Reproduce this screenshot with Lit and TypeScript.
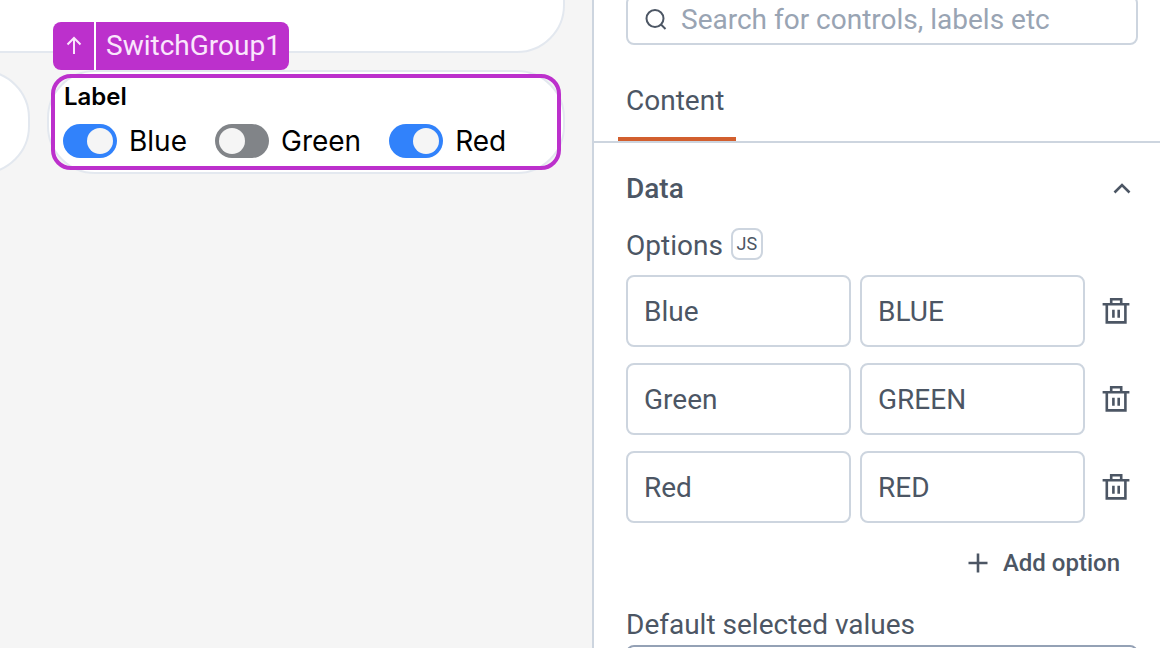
import { LitElement, html, css } from "lit";
import { customElement, state } from "lit/decorators.js";

interface Option {
  label: string;
  value: string;
  on: boolean;
}

@customElement("switch-group")
class SwitchGroup extends LitElement {
  static properties = { options: { attribute: false } };
  declare options: Option[];

  static styles = css`
    :host {
      display: block;
      color: #000;
      font-family: Inter, "Liberation Sans", sans-serif;
    }
    .group {
      margin: 0;
      padding: 0;
      border: 0;
      min-width: 0;
    }
    .title {
      padding: 0 1px;
      font-size: 24px;
      line-height: 32px;
      font-weight: 600;
    }
    .switches {
      display: flex;
      gap: 28px;
      padding-top: 10px;
    }
    .item {
      display: flex;
      align-items: center;
      gap: 12px;
      font-size: 28px;
      line-height: 36px;
    }
    .toggle {
      appearance: none;
      box-sizing: border-box;
      width: 54px;
      height: 34px;
      margin: 0;
      padding: 4px;
      border-radius: 17px;
      background: #818488;
      display: flex;
    }
    .toggle::before {
      content: "";
      width: 26px;
      height: 26px;
      border-radius: 50%;
      background: #f5f5f5;
    }
    .toggle:checked {
      background: #3182fb;
      justify-content: flex-end;
    }
  `;

  render() {
    return html`<fieldset class="group">
      <legend class="title">Label</legend>
      <div class="switches">
        ${this.options.map(
          (o) => html`<label class="item"
            ><input class="toggle" type="checkbox" role="switch" .checked=${o.on} />${o.label}</label
          >`
        )}
      </div>
    </fieldset>`;
  }
}

@customElement("property-pane")
class PropertyPane extends LitElement {
  static properties = { options: { attribute: false } };
  declare options: Option[];

  static styles = css`
    :host {
      display: block;
      box-sizing: border-box;
      border-left: 2px solid #cdd5df;
      background: #fff;
      color: #4c5664;
      font-family: Roboto, "Liberation Sans", sans-serif;
      font-size: 28px;
      line-height: 32px;
      overflow: hidden;
    }
    button,
    input {
      font: inherit;
      color: inherit;
    }
    button {
      background: none;
      border: 0;
      padding: 0;
      cursor: pointer;
    }
    svg {
      display: block;
      fill: none;
      stroke: currentColor;
    }
    .search {
      display: flex;
      align-items: center;
      gap: 12px;
      box-sizing: border-box;
      height: 50px;
      margin: -5px 22px 0 32px;
      padding: 0 16px 0 15px;
      border: 2px solid #cdd5df;
      border-radius: 8px;
    }
    .search-input {
      flex: 1;
      min-width: 0;
      border: 0;
      padding: 0;
      outline: 0;
      background: none;
    }
    .search-input::placeholder {
      color: #99a4b3;
      opacity: 1;
    }
    .tabs {
      display: flex;
      padding: 24px 24px 0;
      border-bottom: 2px solid #cdd5df;
    }
    .tab {
      height: 72px;
      padding: 0 12px 4px 8px;
      border-bottom: 4px solid #d25f2e;
    }
    .section {
      padding: 22px 22px 0 32px;
    }
    .section-toggle {
      display: flex;
      width: 100%;
      height: 48px;
      align-items: center;
      justify-content: space-between;
      padding-right: 4px;
      font-weight: 500;
    }
    .field-head {
      display: flex;
      align-items: flex-start;
      gap: 8px;
      padding: 15px 0 11px;
      line-height: 36px;
    }
    .js {
      box-sizing: border-box;
      width: 32px;
      height: 32px;
      border: 2px solid #cdd5df;
      border-radius: 8px;
      font-size: 18px;
      line-height: 28px;
    }
    .rows {
      display: grid;
      gap: 16px;
    }
    .row {
      display: grid;
      grid-template-columns: 1fr 1fr 44px;
      gap: 9px;
    }
    .field {
      box-sizing: border-box;
      width: 100%;
      min-width: 0;
      height: 72px;
      padding: 0 16px;
      border: 2px solid #cdd5df;
      border-radius: 8px;
      background: #fff;
    }
    .remove {
      display: grid;
      place-items: center;
    }
    .actions {
      display: flex;
      justify-content: flex-end;
      padding: 20px 18px 26px 0;
    }
    .add {
      display: flex;
      align-items: center;
      gap: 15px;
      height: 40px;
      font-size: 24px;
      font-weight: 500;
    }
    .default-label {
      display: block;
      padding-bottom: 4px;
    }
    .default-field {
      border-color: #94a1b5;
    }
  `;

  render() {
    return html`
      <div class="search">
        <svg width="26" height="26" viewBox="0 0 26 26" stroke-width="2">
          <circle cx="12" cy="11.5" r="8.5" />
          <path d="M18 17.5l4.5 4.5" />
        </svg>
        <input class="search-input" type="search" aria-label="Search" placeholder="Search for controls, labels etc" />
      </div>
      <div class="tabs" role="tablist">
        <button class="tab" role="tab" aria-selected="true">Content</button>
      </div>
      <section class="section">
        <button class="section-toggle" aria-expanded="true">
          Data
          <svg width="24" height="24" viewBox="0 0 24 24" stroke-width="2.6">
            <path d="M4.5 15.5L12 8l7.5 7.5" />
          </svg>
        </button>
        <div class="field-head">
          <span>Options</span>
          <button class="js">JS</button>
        </div>
        <div class="rows">
          ${this.options.map(
            (o) => html`<div class="row">
              <input class="field" aria-label="Option label" .value=${o.label} />
              <input class="field" aria-label="Option value" .value=${o.value} />
              <button class="remove" aria-label="Remove option">
                <svg width="28" height="28" viewBox="0 0 28 28" stroke-width="2.6">
                  <path d="M0.6 7.2H27.4M4.8 7.2V25.4H23.4V7.2M9.2 7.2V2.2H19.2V7.2M11.4 12.8v8M16.7 12.8v8" />
                </svg>
              </button>
            </div>`
          )}
        </div>
        <div class="actions">
          <button class="add">
            <svg width="20" height="20" viewBox="0 0 20 20" stroke-width="2.6">
              <path d="M10 0.5v19M0.5 10h19" />
            </svg>
            Add option
          </button>
        </div>
        <label class="default-label" for="defaults">Default selected values</label>
        <input class="field default-field" id="defaults" />
      </section>
    `;
  }
}

@customElement("app-root")
class AppRoot extends LitElement {
  @state() private options: Option[] = [
    { label: "Blue", value: "BLUE", on: true },
    { label: "Green", value: "GREEN", on: false },
    { label: "Red", value: "RED", on: true },
  ];

  static styles = css`
    :host {
      display: grid;
      grid-template-columns: minmax(0, 1fr) 568px;
      height: 100vh;
      overflow: hidden;
    }
    .canvas {
      background: #f5f5f5;
      padding-right: 27px;
      overflow: hidden;
    }
    .card {
      box-sizing: border-box;
      border: 2px solid #e3e8ef;
      border-radius: 48px;
      background: #fff;
    }
    .upper {
      height: 120px;
      margin: -67px 0 17px -60px;
    }
    .line {
      display: flex;
      gap: 17px;
    }
    .neighbour {
      flex: none;
      width: 110px;
      margin-left: -80px;
    }
    .host-card {
      position: relative;
      flex: 1;
      min-width: 0;
      padding: 2px;
    }
    .selection {
      border: 4px solid #bc30cc;
      border-radius: 20px;
      padding: 3px 8px 7px;
    }
    .badge {
      position: absolute;
      left: 4px;
      bottom: calc(100% + 2px);
      display: flex;
      gap: 2px;
      border-radius: 8px;
      overflow: hidden;
      background: #fff;
      font-family: Roboto, "Liberation Sans", sans-serif;
      font-size: 28px;
      line-height: 48px;
      color: #fae6fc;
    }
    .up {
      display: grid;
      place-items: center;
      width: 41px;
      border: 0;
      padding: 0;
      background: #bc30cc;
      color: inherit;
    }
    .up svg {
      fill: none;
      stroke: currentColor;
      stroke-width: 2;
    }
    .name {
      background: #bc30cc;
      padding: 0 8px 0 10px;
    }
  `;

  render() {
    return html`
      <main class="canvas">
        <div class="card upper"></div>
        <div class="line">
          <div class="card neighbour"></div>
          <div class="card host-card">
            <div class="selection">
              <switch-group .options=${this.options}></switch-group>
            </div>
            <div class="badge">
              <button class="up" aria-label="Select parent">
                <svg width="20" height="20" viewBox="0 0 20 20"><path d="M10 18V2M3.5 8.5L10 2l6.5 6.5" /></svg>
              </button>
              <span class="name">SwitchGroup1</span>
            </div>
          </div>
        </div>
      </main>
      <property-pane .options=${this.options}></property-pane>
    `;
  }
}
